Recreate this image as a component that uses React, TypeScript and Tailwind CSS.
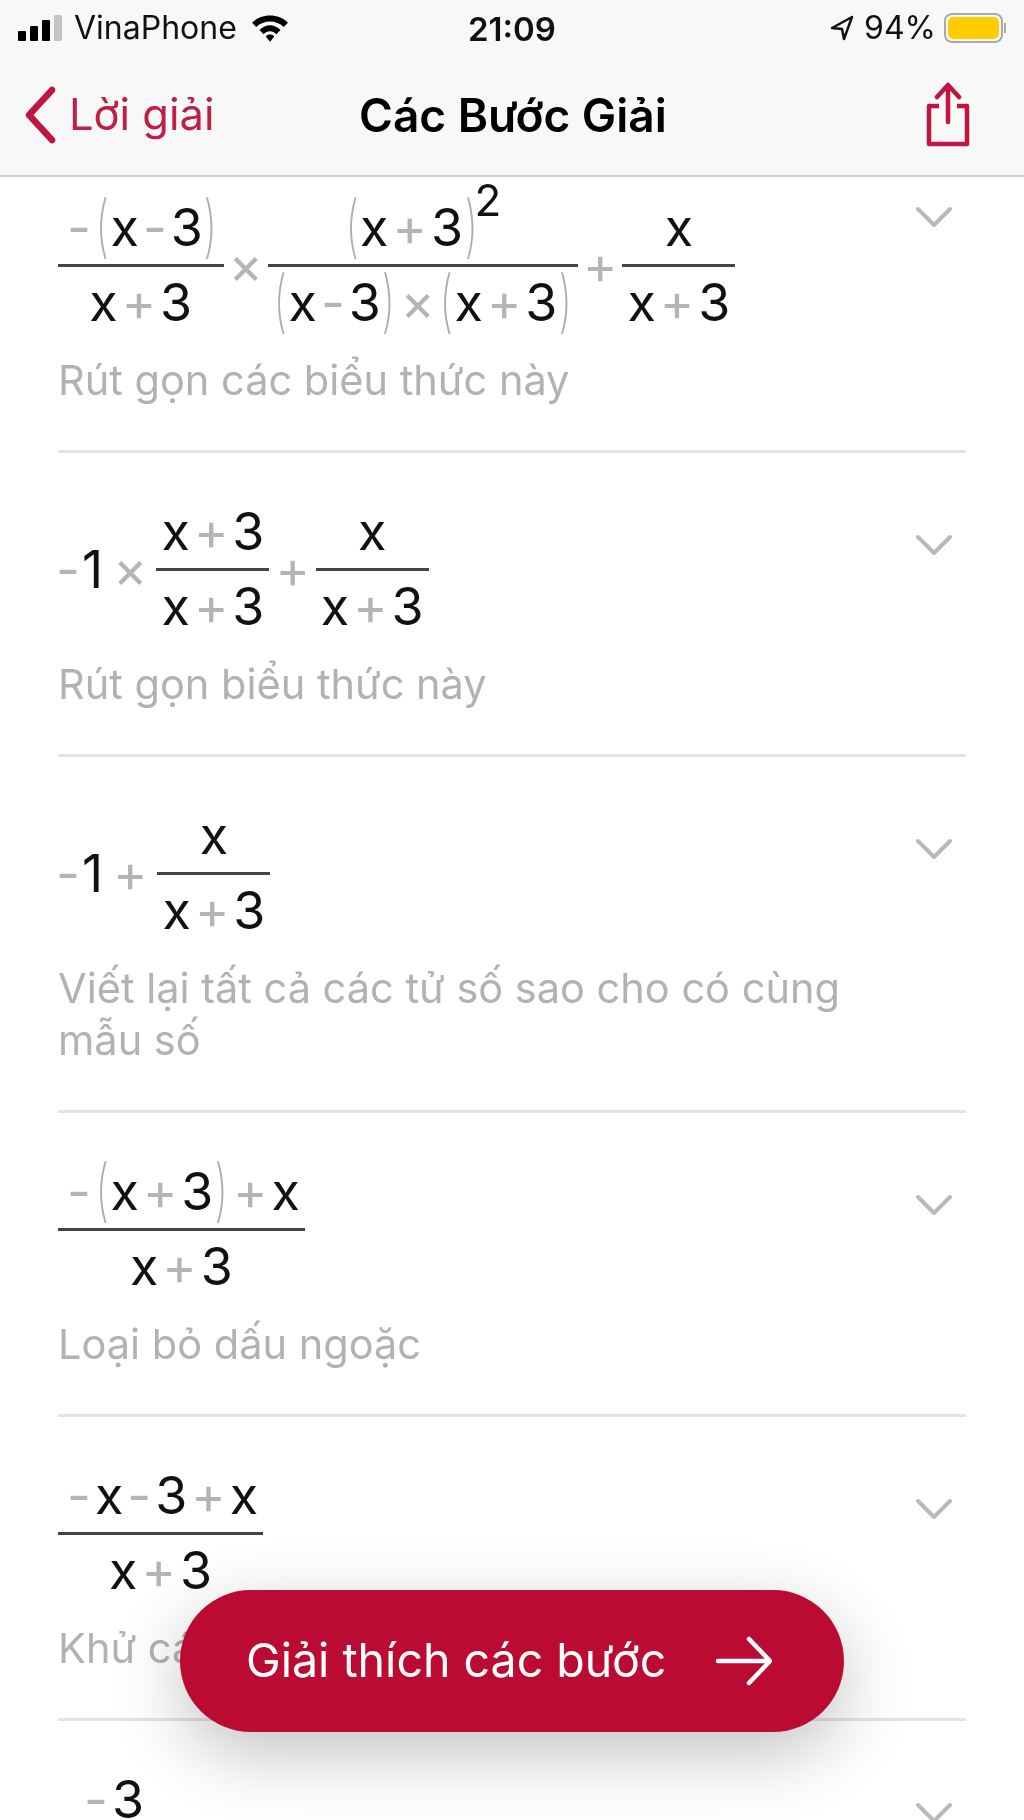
import React from "react";

const Op = ({ c, className = "" }: { c: string; className?: string }) => (
  <span className={`text-[#b4b4b4] font-normal mx-[4px] ${className}`}>{c}</span>
);
const Paren = ({ c }: { c: string }) => (
  <span className="text-[#adadad] font-extralight text-[68px] leading-[68px] scale-x-60 inline-block -mx-[3.5px] -translate-y-[3px]">{c}</span>
);
const Row = ({ children }: { children: React.ReactNode }) => (
  <div className="flex items-center justify-center h-[72px] px-[5px] text-[52px] leading-[72px] text-[#111] whitespace-nowrap">{children}</div>
);
const Frac = ({ num, den }: { num: React.ReactNode; den: React.ReactNode }) => (
  <div className="inline-flex flex-col">
    <Row>{num}</Row>
    <div className="h-[3px] bg-[#444]" />
    <Row>{den}</Row>
  </div>
);
const Chevron = ({ className = "mt-[38px]" }: { className?: string }) => (
  <svg width="36" height="22" viewBox="0 0 36 22" fill="none" className={`shrink-0 ${className}`}>
    <path d="M2 3 L18 19 L34 3" stroke="#b9b9b9" strokeWidth="4" strokeLinecap="round" strokeLinejoin="round" />
  </svg>
);
const Step = ({ math, text, last, className = "", chevron }: { math: React.ReactNode; text?: React.ReactNode; last?: boolean; className?: string; chevron?: string }) => (
  <div className={`flex justify-between pr-[14px] pt-[43px] pb-[44px] ${last ? "" : "border-b-[3px] border-[#e4e4e4]"} ${className}`}>
    <div>
      <div className="flex items-center text-[52px] text-[#111]">{math}</div>
      {text && <p className="mt-[15px] text-[41.5px] leading-[52px] text-[#b2b2b2] w-[800px]">{text}</p>}
    </div>
    <Chevron className={chevron} />
  </div>
);

const xm3 = <>x<Op c="-" />3</>;
const xp3 = <>x<Op c="+" />3</>;

export default function App() {
  return (
    <div className="relative w-[1024px] h-[1820px] overflow-hidden bg-white blur-[0.6px] font-['Inter','Liberation_Sans',sans-serif]">
      <header className="relative z-10 h-[177px] bg-[#f8f8f8] border-b-[2px] border-[#cfcfcf] px-[18px]">
        <div className="relative flex items-center justify-between h-[56px] text-[#111]">
          <div className="flex items-center gap-[12px]">
            <div className="flex items-end gap-[4px] h-[26px]">
              <span className="w-[8px] h-[10px] bg-black rounded-[1px]" />
              <span className="w-[8px] h-[15px] bg-black rounded-[1px]" />
              <span className="w-[8px] h-[21px] bg-black rounded-[1px]" />
              <span className="w-[8px] h-[26px] bg-[#c4c4c4] rounded-[1px]" />
            </div>
            <span className="text-[32px]">VinaPhone</span>
            <svg width="38" height="30" viewBox="0 0 36 28" className="ml-[2px]">
              <path d="M1 9 C10 0 26 0 35 9 L31 13 C24 6 12 6 5 13Z M8 16 C14 10 22 10 28 16 L24 20 C21 16 15 16 12 20Z M14 22 C16 19.500 20 19.500 22 22 L18 27Z" fill="#000" />
            </svg>
          </div>
          <span className="absolute left-[450px] top-[5px] text-[33px] font-semibold">21:09</span>
          <div className="flex items-center gap-[10px]">
            <svg width="24" height="26" viewBox="0 0 24 26" fill="none">
              <path d="M22 2 L2 13 L12 14 L14 24 Z" stroke="#111" strokeWidth="2.500" strokeLinejoin="round" />
            </svg>
            <span className="text-[32px] -mr-[2px]">94%</span>
            <div className="flex items-center">
              <div className="w-[59px] h-[30px] rounded-[8px] border-[2px] border-[#a9a9a9] p-[2px]">
                <div className="w-full h-full rounded-[5px] bg-[#ffcc00]" />
              </div>
              <div className="w-[2px] h-[10px] ml-[1px] bg-[#a9a9a9]" />
            </div>
          </div>
        </div>
        <div className="relative flex items-center justify-between h-[92px] pl-[6px] pr-[36px] mt-[13px]">
          <div className="flex items-center gap-[13px] text-[#bf1e45]">
            <svg width="32" height="58" viewBox="0 0 32 58" fill="none">
              <path d="M28 4 L5 29 L28 54" stroke="#bf1540" strokeWidth="6.500" strokeLinecap="round" strokeLinejoin="round" />
            </svg>
            <span className="text-[43.500px]">Lời giải</span>
          </div>
          <span className="absolute left-[341px] top-[18px] text-[46px] leading-[56px] font-semibold text-black whitespace-nowrap">Các Bước Giải</span>
          <svg width="44" height="66" viewBox="0 0 44 66" fill="none">
            <path d="M13 24 H3 V62 H41 V24 H31" stroke="#bf1540" strokeWidth="4.500" strokeLinejoin="round" />
            <path d="M22 40 V4 M11 15 L22 3 L33 15" stroke="#bf1540" strokeWidth="4.500" strokeLinecap="round" strokeLinejoin="round" />
          </svg>
        </div>
      </header>

      <main className="px-[58px]">
        <Step
          className="-mt-[28px]"
          chevron="mt-[14px]"
          math={
            <>
              <Frac num={<><Op c="-" className="mx-0" /><Paren c="(" />{xm3}<Paren c=")" /></>} den={xp3} />
              <Op c="×" className="mx-[5px]" />
              <Frac
                num={<><Paren c="(" />{xp3}<Paren c=")" /><sup className="text-[44px] -ml-[4px] -top-[28px]">2</sup></>}
                den={<><Paren c="(" />{xm3}<Paren c=")" /><Op c="×" /><Paren c="(" />{xp3}<Paren c=")" /></>}
              />
              <Op c="+" className="mx-[5px]" />
              <Frac num="x" den={xp3} />
            </>
          }
          text="Rút gọn các biểu thức này"
        />
        <Step
          math={
            <>
              <Op c="-" className="mx-0 -ml-[2px] mr-[2px]" />1<Op c="×" className="ml-[10px] mr-[9px]" />
              <Frac num={xp3} den={xp3} />
              <Op c="+" className="mx-[6px]" />
              <Frac num="x" den={xp3} />
            </>
          }
          text="Rút gọn biểu thức này"
        />
        <Step
          math={
            <>
              <Op c="-" className="mx-0 -ml-[2px] mr-[2px]" />1<Op c="+" className="ml-[10px] mr-[10px]" />
              <Frac num="x" den={xp3} />
            </>
          }
          text="Viết lại tất cả các tử số sao cho có cùng mẫu số"
        />
        <Step
          math={<Frac num={<><Op c="-" className="mx-0" /><Paren c="(" />{xp3}<Paren c=")" /><Op c="+" />x</>} den={xp3} />}
          text="Loại bỏ dấu ngoặc"
        />
        <Step
          math={<Frac num={<><Op c="-" className="mx-[3px]" />x<Op c="-" />3<Op c="+" />x</>} den={xp3} />}
          text="Khử các số đối"
        />
        <Step last math={<span className="pl-[22px] leading-[72px]"><Op c="-" className="mx-0" />3</span>} />
      </main>

      <button className="absolute z-20 left-[180px] top-[1590px] w-[664px] h-[142px] rounded-full bg-[#bc0b32] shadow-[0_22px_70px_rgba(0,0,0,0.24)] flex items-center pl-[66px] gap-[50px] text-white text-[46.5px]">
        <span className="whitespace-nowrap">Giải thích các bước</span>
        <svg width="56" height="50" viewBox="0 0 56 50" fill="none" className="shrink-0">
          <path d="M2 25 H53 M33 3 L54 25 L33 47" stroke="#fff" strokeWidth="4.500" strokeLinecap="round" strokeLinejoin="round" />
        </svg>
      </button>
    </div>
  );
}
